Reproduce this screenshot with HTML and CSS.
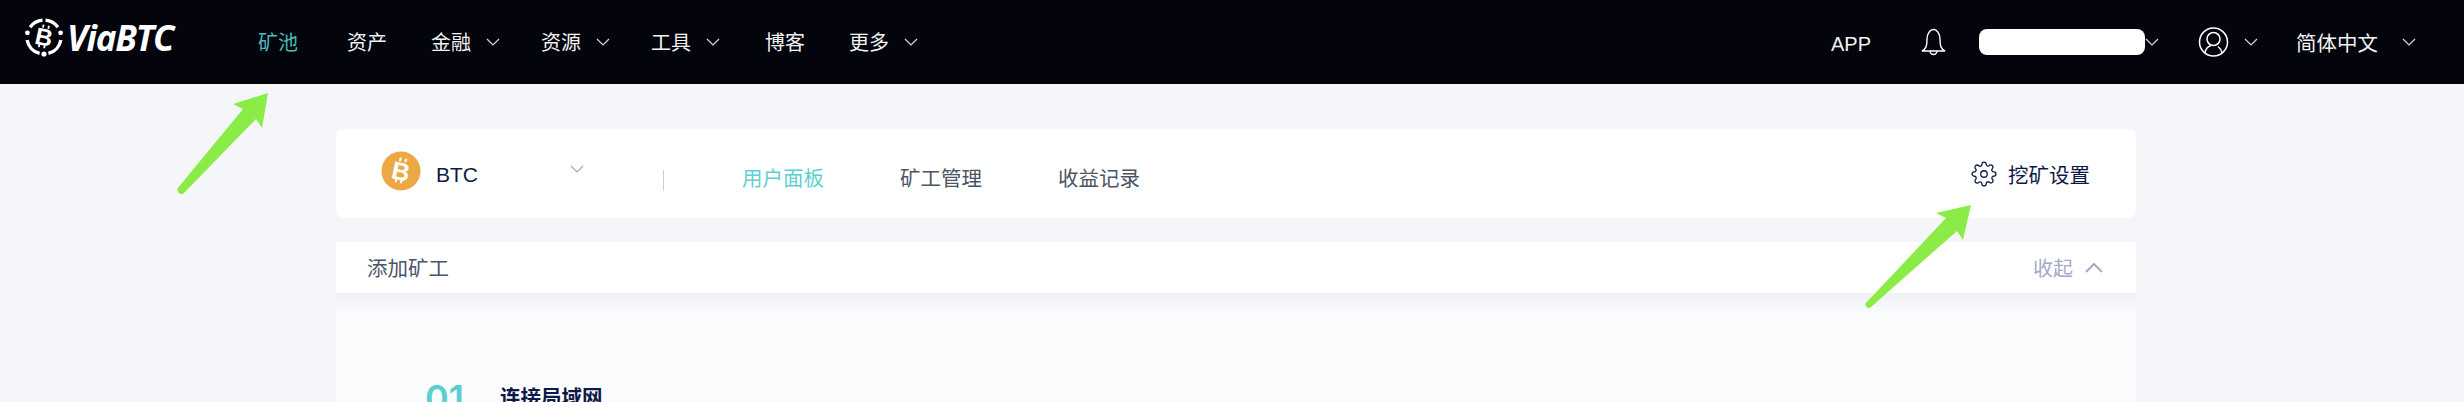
FILE: index.html
```html
<!DOCTYPE html>
<html lang="zh-CN">
  <head>
    <title>ViaBTC</title>
    <meta charset="UTF-8" />
    <meta name="viewport" content="width=device-width" />
    <link rel="stylesheet" href="styles.css">
  </head>
  <body>
    <!-- Top bar -->
    <header class="topbar">
      <a class="logo">
        <svg class="logo-ring" viewBox="0 0 40 40" width="40" height="40">
          <g fill="none" stroke="#fff" stroke-width="3.4">
            <path d="M21.5 3.1A17 17 0 0 1 33.9 10.2" />
            <path d="M36.9 23A17 17 0 0 1 24.4 36.4" />
            <path d="M15.6 36.4A17 17 0 0 1 3.1 23" />
            <path d="M6.1 10.2A17 17 0 0 1 18.5 3.1" />
          </g>
          <g fill="#fff">
            <circle cx="36.6" cy="15.8" r="2.4" />
            <circle cx="20" cy="37" r="2.6" />
            <circle cx="3.4" cy="15.8" r="2.4" />
          </g>
          <g transform="rotate(12 20 20)">
            <text class="coin-b" x="20" y="28.500" font-size="24">B</text>
            <path d="M17 8v3M22.500 8v3M17 28v3M22.500 28v3" stroke="#fff" stroke-width="1.800" />
          </g>
        </svg>
        <span class="logo-text">ViaBTC</span>
      </a>

      <nav class="nav">
        <a class="nav-item active gap-first">矿池</a>
        <a class="nav-item gap-second">资产</a>
        <a class="nav-item has-menu">金融<svg class="chev" viewBox="0 0 14 8"><path d="M1 1l6 6 6-6" /></svg></a>
        <a class="nav-item has-menu">资源<svg class="chev" viewBox="0 0 14 8"><path d="M1 1l6 6 6-6" /></svg></a>
        <a class="nav-item has-menu gap-wide">工具<svg class="chev" viewBox="0 0 14 8"><path d="M1 1l6 6 6-6" /></svg></a>
        <a class="nav-item gap-blog">博客</a>
        <a class="nav-item has-menu">更多<svg class="chev" viewBox="0 0 14 8"><path d="M1 1l6 6 6-6" /></svg></a>
      </nav>

      <div class="top-right">
        <span class="app-link">APP</span>
        <svg class="bell" viewBox="0 0 25 28" width="25" height="28">
          <path d="M1 23c4-2 5-5 5-12a6.500 9.500 0 0 1 13 0c0 7 1 10 5 12z" />
          <path d="M9 23a3.500 3.500 0 0 0 7 0" />
        </svg>
        <span class="account-mask"></span>
        <svg class="chev account-chev" viewBox="0 0 14 8"><path d="M1 1l6 6 6-6" /></svg>
        <svg class="user" viewBox="0 0 31 30" width="31" height="30">
          <circle cx="15.500" cy="15" r="14" />
          <circle cx="15.500" cy="12" r="6.500" />
          <path d="M7 26c.5-4 3-6.500 6-7.500M24 26c-.5-3-2-5-4-6.500" />
        </svg>
        <svg class="chev user-chev" viewBox="0 0 14 8"><path d="M1 1l6 6 6-6" /></svg>
        <span class="lang">简体中文</span>
        <svg class="chev lang-chev" viewBox="0 0 14 8"><path d="M1 1l6 6 6-6" /></svg>
      </div>
    </header>

    <main class="content">
      <!-- Coin selector and tabs -->
      <section class="tabs-card">
        <svg class="coin" viewBox="0 0 40 40" width="40" height="40">
          <circle cx="20" cy="20" r="19.500" fill="#eba844" />
          <g transform="rotate(12 20 20)">
            <text class="coin-b" x="20" y="29" font-size="25">B</text>
            <path d="M17 7v3.500M22.500 7v3.500M17 28.500v3.500M22.500 28.500v3.500" stroke="#fff" stroke-width="2" />
          </g>
        </svg>
        <span class="coin-name">BTC</span>
        <svg class="coin-chev" viewBox="0 0 14 8"><path d="M1 1l6 6 6-6" /></svg>
        <span class="divider"></span>
        <a class="tab active">用户面板</a>
        <a class="tab">矿工管理</a>
        <a class="tab">收益记录</a>
        <a class="settings">
          <svg class="gear" viewBox="0 0 24 24" width="26" height="26">
            <circle cx="12" cy="12" r="3" />
            <path d="M19.400 15a1.650 1.650 0 0 0 .33 1.820l.06.06a2 2 0 0 1 0 2.830 2 2 0 0 1-2.830 0l-.06-.06a1.650 1.650 0 0 0-1.820-.33 1.650 1.650 0 0 0-1 1.510V21a2 2 0 0 1-2 2 2 2 0 0 1-2-2v-.09A1.650 1.650 0 0 0 9 19.400a1.650 1.650 0 0 0-1.820.33l-.06.06a2 2 0 0 1-2.830 0 2 2 0 0 1 0-2.830l.06-.06a1.650 1.650 0 0 0 .33-1.820 1.650 1.650 0 0 0-1.510-1H3a2 2 0 0 1-2-2 2 2 0 0 1 2-2h.09A1.650 1.650 0 0 0 4.600 9a1.650 1.650 0 0 0-.33-1.820l-.06-.06a2 2 0 0 1 0-2.830 2 2 0 0 1 2.830 0l.06.06a1.650 1.650 0 0 0 1.820.33H9a1.650 1.650 0 0 0 1-1.510V3a2 2 0 0 1 2-2 2 2 0 0 1 2 2v.09a1.650 1.650 0 0 0 1 1.510 1.650 1.650 0 0 0 1.820-.33l.06-.06a2 2 0 0 1 2.830 0 2 2 0 0 1 0 2.830l-.06.06a1.650 1.650 0 0 0-.33 1.820V9a1.650 1.650 0 0 0 1.510 1H21a2 2 0 0 1 2 2 2 2 0 0 1-2 2h-.09a1.650 1.650 0 0 0-1.510 1z" />
          </svg>
          挖矿设置
        </a>
      </section>

      <!-- Add miner -->
      <section class="add-head">
        <span class="add-title">添加矿工</span>
        <a class="collapse">收起<svg class="chev-up" viewBox="0 0 18 11"><path d="M1 10l8-8 8 8" /></svg></a>
      </section>
      <section class="add-body">
        <div class="step">
          <span class="step-num">01</span>
          <span class="step-title">连接局域网</span>
        </div>
      </section>
    </main>

    <!-- Green annotation arrows drawn over the screenshot -->
    <svg class="arrows" viewBox="0 0 2464 402" width="2464" height="402">
      <path d="M268 93L233 104L243 109L177 189Q178 195 183 194L256 119L262 128z" />
      <path d="M1971 205L1936 213L1946 218L1865 304Q1867 310 1871 307L1957 231L1963 240z" />
    </svg>
  </body>
</html>
```

FILE: styles.css
```css
* {
  box-sizing: border-box;
}

html,
body {
  height: 402px;
  overflow: hidden;
}

body {
  margin: 0;
  background-color: #f5f6fa;
  font-family: "Noto Sans CJK SC", "Liberation Sans", sans-serif;
  color: #0e1a45;
}

/* Top bar */
.topbar {
  display: flex;
  align-items: center;
  height: 84px;
  padding-left: 24px;
  background-color: #03040c;
  color: #fff;
}

.logo {
  display: flex;
  align-items: center;
  gap: 3px;
  width: 234px;
  margin-top: -10px;
}

.logo-ring {
  flex: none;
}

.logo-text {
  font-family: "Open Sans", "Liberation Sans", sans-serif;
  font-size: 35px;
  font-style: italic;
  font-weight: 700;
  letter-spacing: -1.2px;
}

.coin-b {
  fill: #fff;
  font-family: "Liberation Sans", sans-serif;
  font-weight: 700;
  text-anchor: middle;
}

.nav {
  display: flex;
  align-items: center;
  gap: 41px;
}

.nav-item {
  display: flex;
  align-items: center;
  gap: 15px;
  font-size: 20px;
  line-height: 28px;
  color: #f2f2f2;
}

.nav-item.active {
  color: #4bb8bb;
}

.gap-first {
  margin-right: 8px;
}

.gap-second {
  margin-right: 3px;
}

.gap-wide {
  margin-right: 4px;
}

.gap-blog {
  margin-right: 3px;
}

.chev {
  flex: none;
  width: 14px;
  height: 8px;
  fill: none;
  stroke: #d8d8d8;
  stroke-width: 1.200;
}

.top-right {
  display: flex;
  align-items: center;
  margin-left: auto;
  padding-right: 48px;
}

.app-link {
  width: 40px;
  font-family: "Liberation Sans", sans-serif;
  font-size: 20px;
  line-height: 28px;
  margin-top: 3px;
  color: #f2f2f2;
}

.bell {
  margin-left: 50px;
  fill: none;
  stroke: #fff;
  stroke-width: 1.400;
}

.account-mask {
  width: 166px;
  height: 26px;
  margin-left: 33px;
  border-radius: 8px;
  background-color: #fff;
}

.user {
  margin-left: 39px;
  fill: none;
  stroke: #fff;
  stroke-width: 1.500;
}

.user-chev {
  margin-left: 15px;
}

.lang {
  margin-left: 38px;
  font-size: 20.500px;
  line-height: 28px;
  color: #f2f2f2;
}

.lang-chev {
  margin-left: 24px;
}

/* Page content */
.content {
  width: 1800px;
  margin: 45px 0 0 336px;
}

.tabs-card {
  display: flex;
  align-items: center;
  height: 89px;
  padding: 0 46px 0 45px;
  border-radius: 8px;
  background-color: #fff;
}

.coin {
  margin-top: -5px;
}

.coin-name {
  width: 134px;
  margin-top: 3px;
  margin-left: 15px;
  font-family: "Liberation Sans", sans-serif;
  font-size: 21px;
}

.coin-chev {
  width: 14px;
  height: 8px;
  margin-top: -9px;
  fill: none;
  stroke: #a3a6c0;
  stroke-width: 1.200;
}

.divider {
  width: 1px;
  height: 21px;
  margin: 14px 78px 0 79px;
  background-color: #cfcfcf;
}

.tab {
  margin-top: 6px;
  margin-right: 76px;
  font-size: 20.500px;
  line-height: 28px;
  color: #4b5563;
}

.tab.active {
  color: #5fd0d0;
}

.settings {
  display: flex;
  align-items: center;
  gap: 11px;
  margin-left: auto;
  font-size: 20.500px;
  line-height: 28px;
}

.gear {
  fill: none;
  stroke: #0e1a45;
  stroke-width: 1.200;
}

.add-head {
  display: flex;
  align-items: center;
  justify-content: space-between;
  height: 51px;
  margin-top: 24px;
  padding: 0 33px 0 31px;
  background-color: #fff;
}

.add-title {
  margin-top: -2px;
  font-size: 20.500px;
  color: #4a5568;
}

.collapse {
  display: flex;
  align-items: center;
  gap: 12px;
  margin-top: -1px;
  font-size: 20px;
  color: #a5a9c4;
}

.chev-up {
  width: 18px;
  height: 11px;
  fill: none;
  stroke: #a5a9c4;
  stroke-width: 2;
}

.add-body {
  height: 109px;
  overflow: hidden;
  padding: 83px 0 0 89px;
  background: linear-gradient(#eff0f4, #fafbfd 20px);
}

.step {
  display: flex;
  align-items: center;
  gap: 36px;
}

.step-num {
  font-family: "Inter", "Liberation Sans", sans-serif;
  font-size: 36px;
  font-weight: 600;
  line-height: 44px;
  color: #5bcfd0;
}

.step-title {
  margin-top: -4px;
  font-size: 20.500px;
  font-weight: 700;
}

/* Annotation overlay */
.arrows {
  position: absolute;
  top: 0;
  left: 0;
  pointer-events: none;
  fill: #8cec47;
}
```
